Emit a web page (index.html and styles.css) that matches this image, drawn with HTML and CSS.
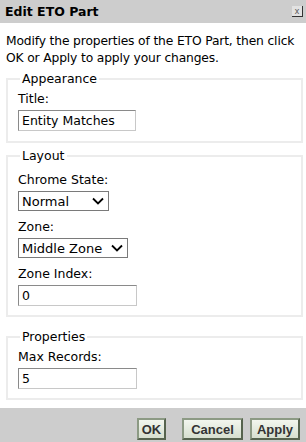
FILE: index.html
```html
<!DOCTYPE html>
<html>
<head>
<meta charset="utf-8">
<link rel="stylesheet" href="styles.css">
</head>
<body>
<div class="dialog">
  <div class="titlebar">
    <span class="title">Edit ETO Part</span>
    <span class="close">x</span>
  </div>
  <div class="content">
    <p class="intro">Modify the properties of the ETO Part, then click OK or Apply to apply your changes.</p>
    <fieldset class="group g-appearance">
      <legend>Appearance</legend>
      <label class="lbl">Title:</label>
      <div class="field text w-title">Entity Matches</div>
    </fieldset>
    <fieldset class="group g-layout">
      <legend>Layout</legend>
      <label class="lbl">Chrome State:</label>
      <div class="field select w-chrome"><span>Normal</span><svg class="chev" viewBox="0 0 12 8" width="12" height="8"><path d="M1 1.5 L6 6.5 L11 1.5" fill="none" stroke="#000" stroke-width="1.8"/></svg></div>
      <label class="lbl">Zone:</label>
      <div class="field select w-zone"><span>Middle Zone</span><svg class="chev" viewBox="0 0 12 8" width="12" height="8"><path d="M1 1.5 L6 6.5 L11 1.5" fill="none" stroke="#000" stroke-width="1.8"/></svg></div>
      <label class="lbl">Zone Index:</label>
      <div class="field text w-num">0</div>
    </fieldset>
    <fieldset class="group">
      <legend>Properties</legend>
      <label class="lbl">Max Records:</label>
      <div class="field text w-num">5</div>
    </fieldset>
  </div>
  <div class="footer">
    <button class="btn btn-ok">OK</button>
    <button class="btn btn-cancel">Cancel</button>
    <button class="btn btn-apply">Apply</button>
  </div>
</div>
</body>
</html>
```
FILE: styles.css
```css
* { box-sizing: border-box; }
html, body { margin: 0; padding: 0; }
body {
  width: 306px;
  height: 442px;
  background: #fff;
  font-family: "DejaVu Sans", Verdana, sans-serif;
  font-size: 12px;
  color: #000;
  overflow: hidden;
}
.dialog { display: flex; flex-direction: column; height: 442px; }
.titlebar {
  height: 24px;
  background: #cdcdcd;
  display: flex;
  align-items: center;
  justify-content: space-between;
  padding: 0 3px 0 5px;
}
.title { font-weight: bold; font-size: 12.5px; }
.close {
  width: 11px; height: 11px;
  font-size: 9px; line-height: 10px;
  text-align: center;
  color: #555;
  background: #e2e2e2;
  border-right: 1px solid #333;
  border-bottom: 1px solid #333;
  font-family: "Liberation Sans", Arial, sans-serif;
}
.content { flex: 1; padding: 10px 3px 0 6px; }
.intro { margin: 0 -4px 4px 0; line-height: 17px; font-size: 12.3px; letter-spacing: -0.15px; }
.group {
  margin: 0 0 8px 0;
  border: 2px solid #ececec;
  padding: 5px 10px 9px 10px;
  min-width: 0;
}
.g-appearance { margin-bottom: 5px; padding-bottom: 10px; }
.g-layout { margin-bottom: 12px; padding-top: 9px; }
.g-layout .field { margin-bottom: 8px; }
legend { padding: 0 2px; margin-left: 2px; font-size: 12.5px; }
.lbl { display: block; font-size: 12.5px; line-height: 16px; margin-bottom: 3px; }
.field {
  height: 21px;
  border: 1px solid #8a8a8a;
  border-color: #8a8a8a #c8c8c8 #c8c8c8 #8a8a8a;
  padding: 0 3px;
  line-height: 19px;
  font-size: 12.5px;
  margin-bottom: 6px;
}
.group .field:last-child { margin-bottom: 0; }
.select {
  display: flex; align-items: center; justify-content: space-between;
  border: 1px solid #7a7a7a;
  height: 20px;
  padding: 0 4px 0 3px;
  font-size: 13px;
}
.w-title { width: 118px; }
.w-chrome { width: 91px; }
.w-zone { width: 110px; }
.w-num { width: 119px; }
.footer {
  height: 35px;
  background: #cdcdcd;
  display: flex;
  justify-content: flex-end;
  align-items: flex-end;
  gap: 7px;
  padding: 0 6px 2px 0;
}
.btn {
  height: 22px;
  padding: 0;
  border: 2px solid #6b7a62;
  border-color: #8c9a84 #56634e #56634e #8c9a84;
  background: linear-gradient(#f2f6ee, #d6dfcf);
  font-family: "Liberation Sans", Arial, sans-serif;
  font-weight: bold;
  font-size: 13px;
  color: #333;
  text-align: center;
}
.btn-ok { width: 29px; margin-right: 9px; }
.btn-cancel { width: 61px; }
.btn-apply { width: 50px; }
```
